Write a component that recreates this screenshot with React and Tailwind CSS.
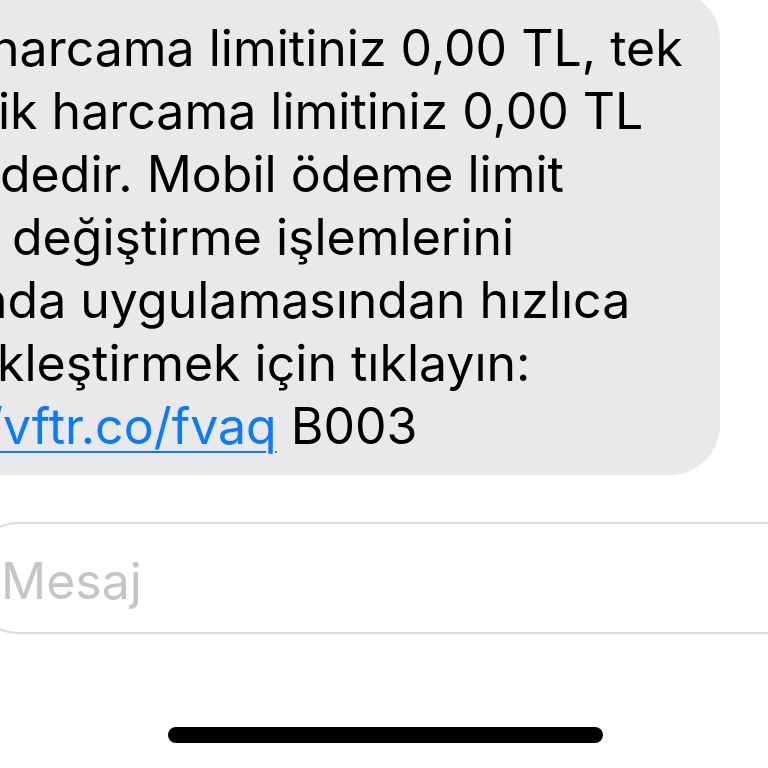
const lines = [
  { text: 'harcama limitiniz 0,00 TL, tek', indent: 'ml-[90px]' },
  { text: 'ik harcama limitiniz 0,00 TL', indent: 'ml-[98px]' },
  { text: 'dedir. Mobil ödeme limit', indent: 'ml-[100px]' },
  { text: 'değiştirme işlemlerini', indent: 'ml-[112px]' },
  { text: 'nda uygulamasından hızlıca', indent: 'ml-[78px]' },
  { text: 'kleştirmek için tıklayın:', indent: 'ml-[97px]' },
];

export default function App() {
  return (
    <div
      className="w-[768px] h-[768px] overflow-hidden bg-white"
      style={{ fontFamily: 'Inter, "Noto Sans", sans-serif' }}
    >
      {/* incoming sms bubble, left side runs off screen */}
      <div className="-mt-[10px] -ml-[100px] w-[820px] rounded-[50px] bg-[#e9e9eb] pt-[27px] pb-[17px] text-[50px] leading-[63px] text-black">
        {lines.map((l) => (
          <div key={l.text} className={`${l.indent} whitespace-nowrap`}>
            {l.text}
          </div>
        ))}
        <div className="ml-[85px] whitespace-nowrap">
          <span className="text-[#0a7aff] underline decoration-[2px] underline-offset-[7px]">/vftr.co/fvaq</span> B003
        </div>
      </div>

      {/* message input */}
      <div className="mt-[47px] -ml-[36px] w-[860px] h-[112px] rounded-[56px] border-2 border-[#dcdcdc] bg-white pl-[35px] pt-[27px]">
        <div className="text-[50px] leading-[60px] text-[#c5c5c7]">Mesaj</div>
      </div>

      {/* home indicator */}
      <div className="mt-[93px] ml-[168px] w-[435px] h-[16px] rounded-full bg-black" />
    </div>
  );
}
